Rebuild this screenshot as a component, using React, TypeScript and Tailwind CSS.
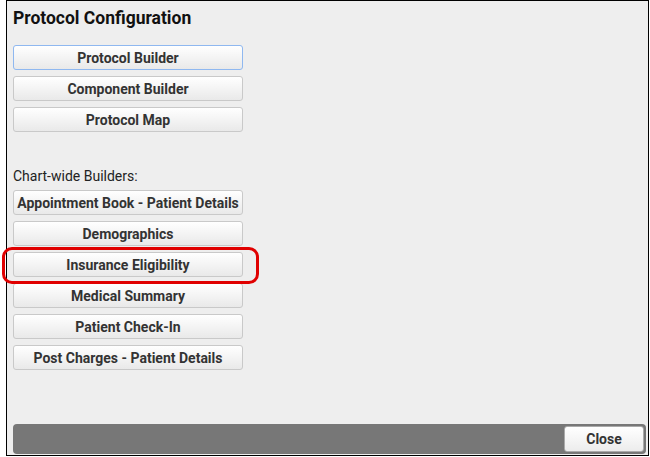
import React from "react";

const topButtons = ["Protocol Builder", "Component Builder", "Protocol Map"];
const chartButtons = [
  "Appointment Book - Patient Details",
  "Demographics",
  "Insurance Eligibility",
  "Medical Summary",
  "Patient Check-In",
  "Post Charges - Patient Details",
];

function Btn({ label, focused }: { label: string; focused?: boolean }) {
  return (
    <button
      className={
        "w-[230px] h-[25px] rounded-[3px] border bg-gradient-to-b from-white to-[#e9e9e9] text-[14px] font-bold text-[#333] leading-none whitespace-nowrap " +
        (focused ? "border-[#8fb8f0]" : "border-[#c9c9c9]")
      }
    >
      {label}
    </button>
  );
}

export default function App() {
  return (
    <div
      className="relative w-[650px] h-[457px] bg-white overflow-hidden"
      style={{ fontFamily: "Roboto, 'Liberation Sans', sans-serif" }}
    >
      <div className="ml-[6px] w-[643px] h-[456px] border border-black bg-[#eeeeee] flex flex-col">
        <div className="pl-[6px] pt-[7px]">
          <h1 className="text-[17.5px] font-bold text-[#111] leading-[20px]">
            Protocol Configuration
          </h1>
          <div className="mt-[17px] flex flex-col gap-[6px]">
            {topButtons.map((b, i) => (
              <Btn key={b} label={b} focused={i === 0} />
            ))}
          </div>
          <div className="mt-[36px] text-[14px] text-[#222] leading-[16px]">
            Chart-wide Builders:
          </div>
          <div className="mt-[6px] flex flex-col gap-[6px]">
            {chartButtons.map((b) => (
              <Btn key={b} label={b} />
            ))}
          </div>
        </div>
        <div className="mt-auto mb-[1px] ml-[6px] mr-[2px] h-[30px] rounded-[4px] bg-[#777777] flex items-center justify-end pr-[2px]">
          <button className="w-[80px] h-[26px] rounded-[3px] border border-[#aaa] bg-gradient-to-b from-white to-[#ececec] text-[14px] font-bold text-[#333]">
            Close
          </button>
        </div>
      </div>
      <div className="absolute left-[2px] top-[247px] w-[257px] h-[37px] rounded-[10px] border-[3px] border-[#e00000]" />
    </div>
  );
}
